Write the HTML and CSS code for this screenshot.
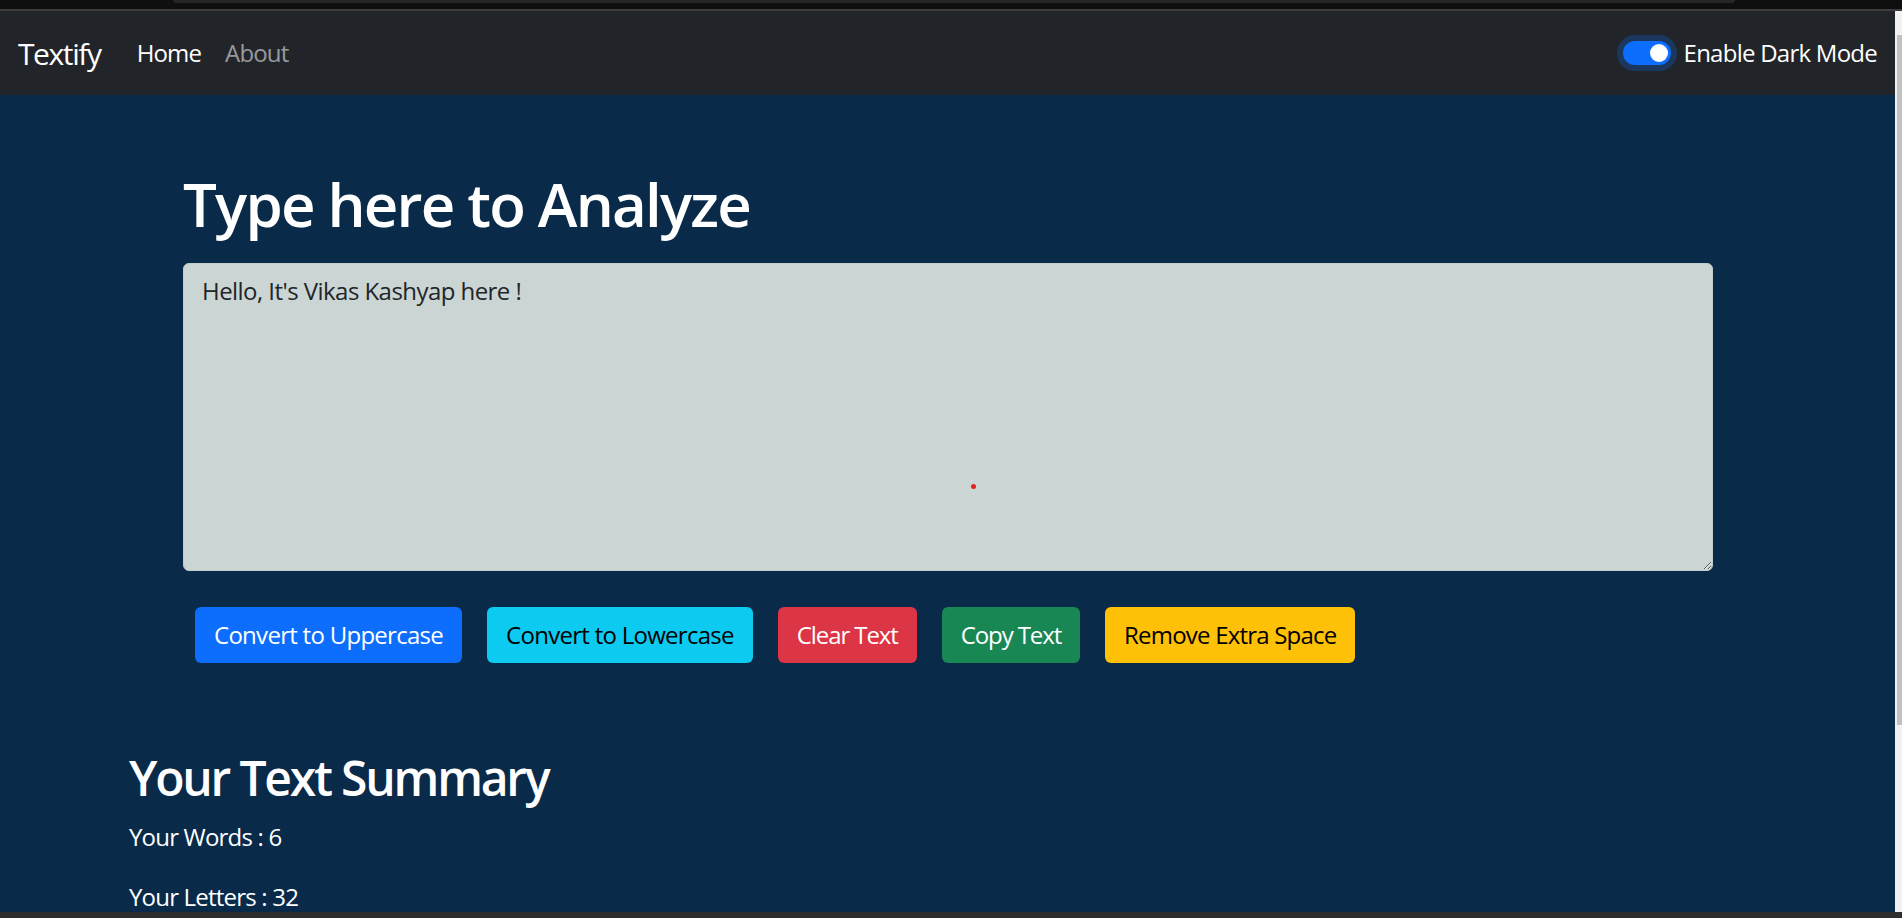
FILE: index.html
```html
<!DOCTYPE html>
<html lang="en">
<head>
<meta charset="utf-8">
<title>Textify</title>
<link rel="stylesheet" href="styles.css">
</head>
<body>
<div class="chrome-top"><div class="chrome-tab"></div></div>
<div class="chrome-line"></div>
<div class="window">
  <div class="page">
    <nav class="navbar">
      <a class="brand" href="#">Textify</a>
      <ul class="nav-links">
        <li><a class="nav-link active" href="#">Home</a></li>
        <li><a class="nav-link" href="#">About</a></li>
      </ul>
      <label class="switch-wrap">
        <span class="switch"><span class="knob"></span></span>
        <span class="switch-label">Enable Dark Mode</span>
      </label>
    </nav>
    <main class="main">
      <section class="analyzer">
        <h1 class="title">Type here to Analyze</h1>
        <div class="textarea-wrap">
          <textarea class="textbox" rows="8">Hello, It's Vikas Kashyap here !</textarea>
          <span class="red-dot"></span>
        </div>
        <div class="buttons">
          <button class="btn btn-primary">Convert to Uppercase</button>
          <button class="btn btn-info">Convert to Lowercase</button>
          <button class="btn btn-danger btn-compact">Clear Text</button>
          <button class="btn btn-success btn-compact">Copy Text</button>
          <button class="btn btn-warning btn-snug">Remove Extra Space</button>
        </div>
      </section>
      <section class="summary">
        <h2 class="summary-title">Your Text Summary</h2>
        <p class="stat">Your Words : 6</p>
        <p class="stat">Your Letters : 32</p>
      </section>
    </main>
  </div>
  <div class="scrollbar">
    <div class="scroll-btn"></div>
    <div class="scroll-thumb"></div>
    <div class="scroll-track"></div>
  </div>
</div>
<div class="chrome-bottom"></div>
</body>
</html>
```

FILE: styles.css
```css
* { box-sizing: border-box; }
html, body {
  margin: 0;
  padding: 0;
  height: 918px;
  overflow: hidden;
  background: #0f0f0f;
  font-family: "Open Sans", "Noto Sans", "Liberation Sans", sans-serif;
}

.chrome-top {
  height: 9px;
  background: #0f0f0f;
  display: flex;
}
.chrome-tab {
  margin-left: 173px;
  width: 1562px;
  height: 3px;
  background: #262626;
  border-radius: 0 0 6px 6px;
}
.chrome-line {
  height: 2px;
  background: #3c3c3c;
}

.window {
  display: flex;
  height: 901px;
  overflow: hidden;
}
.page {
  flex: 1;
  background: #0a2a4a;
  overflow: hidden;
}
.scrollbar {
  width: 7px;
  display: flex;
  flex-direction: column;
  background: #f1f1f1;
}
.scroll-btn { height: 24px; background: #f1f1f1; }
.scroll-thumb { height: 690px; background: #c1c1c1; margin-left: 2px; }
.scroll-track { flex: 1; background: #f1f1f1; }

.chrome-bottom {
  height: 6px;
  background: #2e2e2e;
}

/* navbar */
.navbar {
  height: 84px;
  background: #212529;
  display: flex;
  align-items: center;
  padding: 0 18px;
}
.brand {
  color: #fff;
  font-size: 30px;
  letter-spacing: -1.4px;
  text-decoration: none;
  margin-right: 24px;
  line-height: 45px;
}
.nav-links {
  list-style: none;
  display: flex;
  margin: 0;
  padding: 0;
  flex: 1;
}
.nav-link {
  display: block;
  padding: 0 12px;
  font-size: 24px;
  letter-spacing: -0.85px;
  line-height: 36px;
  color: rgba(255, 255, 255, 0.55);
  text-decoration: none;
}
.nav-link.active { color: #fff; }

.switch-wrap {
  display: flex;
  align-items: center;
  color: #fff;
  font-size: 24px;
}
.switch {
  width: 48px;
  height: 24px;
  border-radius: 12px;
  background: #0d6efd;
  box-shadow: 0 0 0 6px rgba(13, 110, 253, 0.25);
  display: flex;
  align-items: center;
  justify-content: flex-end;
  padding-right: 3px;
}
.knob {
  width: 18px;
  height: 18px;
  border-radius: 50%;
  background: #fff;
}
.switch-label {
  margin-left: 13px;
  line-height: 36px;
  letter-spacing: -0.75px;
}

/* main */
.analyzer {
  padding: 73px 182px 0 183px;
}
.title {
  margin: 0 0 23px;
  font-size: 60px;
  font-weight: 600;
  letter-spacing: -1.8px;
  line-height: 72px;
  color: #fff;
}
.textarea-wrap {
  position: relative;
  width: 1530px;
}
.textbox {
  display: block;
  width: 1530px;
  height: 308px;
  margin: 0;
  padding: 9px 18px;
  font-family: inherit;
  font-size: 24px;
  letter-spacing: -0.55px;
  line-height: 36px;
  color: #212529;
  background: #cbd5d4;
  border: 1px solid #c3cdcc;
  border-radius: 6px;
  outline: none;
}
.red-dot {
  position: absolute;
  left: 788px;
  top: 221px;
  width: 5px;
  height: 5px;
  border-radius: 50%;
  background: #e3211f;
}

.buttons {
  display: flex;
  gap: 25px;
  padding-left: 12px;
  margin-top: 36px;
}
.btn {
  font-family: inherit;
  font-size: 24px;
  letter-spacing: -0.72px;
  line-height: 36px;
  padding: 9px 18px;
  border: 1px solid transparent;
  border-radius: 6px;
  height: 56px;
  cursor: pointer;
}
.btn-compact { letter-spacing: -1.1px; }
.btn-snug { letter-spacing: -0.8px; }
.btn-primary { background: #0d6efd; color: #fff; }
.btn-info { background: #0dcaf0; color: #000; }
.btn-danger { background: #dc3545; color: #fff; }
.btn-success { background: #198754; color: #fff; }
.btn-warning { background: #ffc107; color: #000; }

.summary {
  padding: 86px 0 0 129px;
  color: #fff;
}
.summary-title {
  margin: 0 0 12px;
  font-size: 48px;
  font-weight: 600;
  letter-spacing: -2.2px;
  line-height: 58px;
}
.stat {
  margin: 0 0 24px;
  font-size: 24px;
  letter-spacing: -0.8px;
  line-height: 36px;
}
```
